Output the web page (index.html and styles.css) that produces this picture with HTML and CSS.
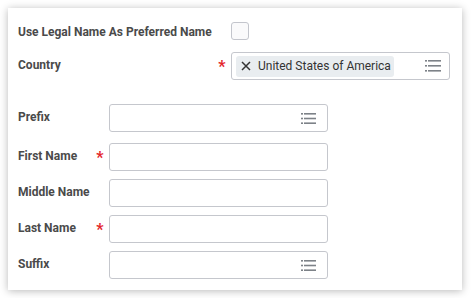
FILE: index.html
```html
<!DOCTYPE html>
<html lang="en">
<head>
    <meta charset="UTF-8">
    <meta name="viewport" content="width=device-width, initial-scale=1.0">
    <title>Legal Name</title>
    <link rel="stylesheet" href="styles.css">
</head>
<body>

<div class="card">
    <!-- Top section: checkbox + country -->
    <div class="form-grid wide">
        <label class="field-label legal">Use Legal Name As Preferred Name</label>
        <span class="req"></span>
        <div class="row-check">
            <span class="checkbox"></span>
        </div>

        <label class="field-label">Country</label>
        <span class="req">*</span>
        <div class="input select country">
            <span class="tag">
                <svg class="tag-x" width="10" height="10" viewBox="0 0 10 10">
                    <path d="M1 1 L9 9 M9 1 L1 9" stroke="#333" stroke-width="1.5" fill="none"/>
                </svg>
                United States of America
            </span>
            <svg class="list-icon" width="16" height="12" viewBox="0 0 16 12">
                <rect x="0" y="0" width="2" height="1.6" fill="#7d8288"/>
                <rect x="3" y="0" width="13" height="1.6" fill="#7d8288"/>
                <rect x="0" y="5" width="2" height="1.6" fill="#7d8288"/>
                <rect x="3" y="5" width="13" height="1.6" fill="#7d8288"/>
                <rect x="0" y="10" width="2" height="1.6" fill="#7d8288"/>
                <rect x="3" y="10" width="13" height="1.6" fill="#7d8288"/>
            </svg>
        </div>
    </div>

    <!-- Name section -->
    <div class="form-grid narrow">
        <label class="field-label">Prefix</label>
        <span class="req"></span>
        <div class="input select">
            <svg class="list-icon" width="15" height="11" viewBox="0 0 15 11">
                <rect x="0" y="0" width="2" height="1.6" fill="#7d8288"/>
                <rect x="3" y="0" width="12" height="1.6" fill="#7d8288"/>
                <rect x="0" y="4.7" width="2" height="1.6" fill="#7d8288"/>
                <rect x="3" y="4.7" width="12" height="1.6" fill="#7d8288"/>
                <rect x="0" y="9.4" width="2" height="1.6" fill="#7d8288"/>
                <rect x="3" y="9.4" width="12" height="1.6" fill="#7d8288"/>
            </svg>
        </div>

        <label class="field-label first">First Name</label>
        <span class="req first">*</span>
        <div class="input first"></div>

        <label class="field-label">Middle Name</label>
        <span class="req"></span>
        <div class="input"></div>

        <label class="field-label">Last Name</label>
        <span class="req">*</span>
        <div class="input"></div>

        <label class="field-label">Suffix</label>
        <span class="req"></span>
        <div class="input select">
            <svg class="list-icon" width="15" height="11" viewBox="0 0 15 11">
                <rect x="0" y="0" width="2" height="1.6" fill="#7d8288"/>
                <rect x="3" y="0" width="12" height="1.6" fill="#7d8288"/>
                <rect x="0" y="4.7" width="2" height="1.6" fill="#7d8288"/>
                <rect x="3" y="4.7" width="12" height="1.6" fill="#7d8288"/>
                <rect x="0" y="9.4" width="2" height="1.6" fill="#7d8288"/>
                <rect x="3" y="9.4" width="12" height="1.6" fill="#7d8288"/>
            </svg>
        </div>
    </div>
</div>

</body>
</html>
```
FILE: styles.css
```css
/* General styling */
body {
    margin: 0;
    padding: 8px;
    background: #fff;
    font-family: Roboto, 'Liberation Sans', Arial, sans-serif;
    color: #333;
}
.card {
    width: 454px;
    height: 282px;
    box-sizing: border-box;
    background: #fff;
    padding: 14px 10px 0 10px;
    box-shadow: 0 1px 8px rgba(0, 0, 0, 0.28);
}
.form-grid {
    display: grid;
    align-items: center;
    row-gap: 8px;
}
.form-grid.wide {
    grid-template-columns: 195px 18px 219px;
    row-gap: 12px;
}
.form-grid.narrow {
    grid-template-columns: 73px 18px 219px;
    margin-top: 24px;
}
.field-label {
    font-size: 12px;
    font-weight: 700;
    color: #4a4a4a;
    white-space: nowrap;
    margin-top: -2px;
}
.field-label.legal {
    margin-top: 2px;
}
.req {
    color: #e4262b;
    font-size: 16px;
    font-weight: 700;
    text-align: center;
    line-height: 1;
    margin-top: 2px;
}
.form-grid.narrow .first {
    margin-top: 3px;
}
.form-grid.narrow .field-label.first {
    margin-top: 1px;
}
.form-grid.narrow .req.first {
    margin-top: 5px;
}
.row-check {
    display: flex;
    height: 18px;
}
.checkbox {
    display: block;
    width: 16px;
    height: 16px;
    border: 1px solid #c3c5cc;
    border-radius: 3px;
    background: #fafafb;
}
.input {
    height: 28px;
    box-sizing: border-box;
    border: 1px solid #c5c7cd;
    border-radius: 3px;
    background: #fff;
}
.input.select {
    display: flex;
    align-items: center;
    justify-content: flex-end;
    padding-right: 11px;
}
.input.country {
    justify-content: space-between;
    padding: 0 8px 0 4px;
}
.tag {
    display: flex;
    align-items: center;
    gap: 7px;
    height: 21px;
    padding: 0 3px 0 5px;
    background: #e9edf0;
    border-radius: 3px;
    font-size: 12px;
    color: #333;
}
.tag-x {
    display: block;
}
.list-icon {
    display: block;
}
```
